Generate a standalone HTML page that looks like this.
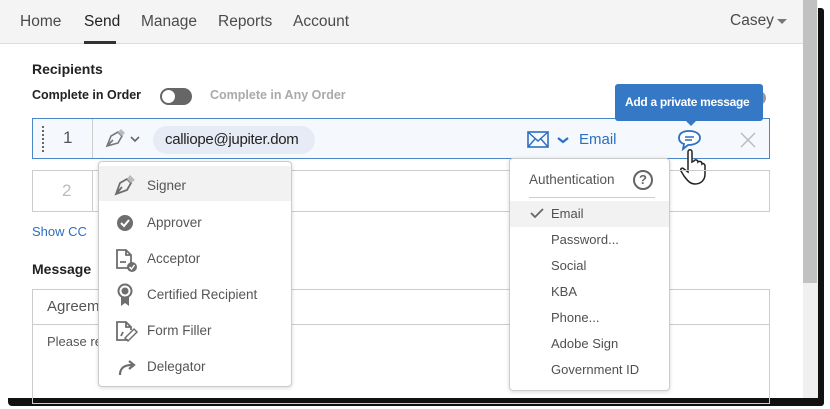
<!DOCTYPE html>
<html><head><meta charset="utf-8"><style>
*{box-sizing:border-box;margin:0;padding:0}
body{width:830px;height:409px;background:#fff;position:relative;overflow:hidden;font-family:"Liberation Sans",sans-serif;color:#333}
.a{position:absolute;white-space:nowrap}
.nav{left:0;top:0;width:803px;height:44px;background:#f4f4f4;border-bottom:1px solid #ddd}
.nv{top:13px;font-size:15.5px;color:#4b4b4b}
.mi{font-size:13.5px;color:#555}
.ai{font-size:13px;color:#505050;left:551px}
</style></head><body>
<div class="a nav"></div>
<div class="a nv" style="left:20px">Home</div>
<div class="a nv" style="left:84px;color:#222">Send</div>
<div class="a" style="left:84px;top:41px;width:32px;height:3px;background:#333"></div>
<div class="a nv" style="left:141px">Manage</div>
<div class="a nv" style="left:218px">Reports</div>
<div class="a nv" style="left:293px">Account</div>
<div class="a nv" style="left:730px;top:12px">Casey</div>
<div class="a" style="left:777px;top:19px;border-left:5px solid transparent;border-right:5px solid transparent;border-top:5px solid #777"></div>
<!-- scrollbar & shadow -->
<div class="a" style="left:803px;top:0;width:15px;height:398px;background:#f0f0f0"></div>
<div class="a" style="left:803px;top:0;width:14px;height:283px;background:#c1c1c1"></div>
<div class="a" style="left:818px;top:8px;width:6px;height:398px;background:#111;border-radius:0 3px 3px 0"></div>
<div class="a" style="left:8px;top:398px;width:816px;height:8px;background:#111;border-radius:0 0 4px 4px"></div>

<div class="a" style="left:32px;top:61px;font-size:14px;font-weight:bold;color:#222">Recipients</div>
<div class="a" style="left:32px;top:88px;font-size:12.5px;font-weight:bold;color:#222">Complete in Order</div>
<div class="a" style="left:160px;top:88px;width:32px;height:17px;border-radius:9px;background:#666"></div>
<div class="a" style="left:162px;top:90px;width:13px;height:13px;border-radius:50%;background:#fff"></div>
<div class="a" style="left:210px;top:88px;font-size:12.5px;font-weight:bold;color:#aaa">Complete in Any Order</div>
<div class="a" style="left:752px;top:91px;width:14px;height:14px;border-radius:50%;background:#999"></div>

<!-- row 1 -->
<div class="a" style="left:32px;top:118px;width:738px;height:41px;border:1px solid #4a86c8;background:#f5f8fc"></div>
<div class="a" style="left:42px;top:126px;height:26px;border-left:2px dotted #666"></div>
<div class="a" style="left:63px;top:128px;font-size:17px;color:#555">1</div>
<div class="a" style="left:92px;top:119px;width:1px;height:39px;background:#ccc"></div>
<svg class="a" style="left:104px;top:127px" width="40" height="24" viewBox="0 0 40 24"><path d="M3 19 L7 9 L14 5 L18 9 L14 16 Z M3 19 L9 13" fill="none" stroke="#777" stroke-width="1.6"/><path d="M14 5 L17 2 L21 6 L18 9 Z" fill="#bbb"/><path d="M27 10 L31 14 L35 10" fill="none" stroke="#666" stroke-width="1.6"/></svg>
<div class="a" style="left:153px;top:126px;width:162px;height:28px;border-radius:14px;background:#e6ebf5"></div>
<div class="a" style="left:165px;top:131px;font-size:15px;letter-spacing:-0.3px;color:#222">calliope@jupiter.dom</div>
<svg class="a" style="left:527px;top:130px" width="50" height="20" viewBox="0 0 50 20"><rect x="1" y="2" width="20" height="15" fill="none" stroke="#2d6fc0" stroke-width="1.6"/><path d="M1 2 L11 11 L21 2 M1 17 L8 9 M21 17 L14 9" fill="none" stroke="#2d6fc0" stroke-width="1.4"/><path d="M31 8 L36 12 L41 8" fill="none" stroke="#2d6fc0" stroke-width="2.2"/></svg>
<div class="a" style="left:579px;top:131px;font-size:15px;color:#2d6fc0">Email</div>
<svg class="a" style="left:740px;top:132px" width="16" height="16"><path d="M1 1 L15 15 M15 1 L1 15" stroke="#bbb" stroke-width="1.5"/></svg>
<!-- tooltip -->
<div class="a" style="left:615px;top:84px;width:148px;height:37px;background:#3478c6;border-radius:3px"></div>
<div class="a" style="left:685px;top:120px;border-left:6px solid transparent;border-right:6px solid transparent;border-top:6px solid #3478c6"></div>
<div class="a" style="left:625px;top:95px;font-size:12px;letter-spacing:-0.3px;font-weight:bold;color:#fff">Add a private message</div>
<svg class="a" style="left:676px;top:128px" width="30" height="60" viewBox="0 0 30 60"><path d="M13 3 C6 3 3 6 3 10 C3 13 5 15 8 16 L7 21 L12 17 C19 17 24 14 24 10 C24 6 20 3 13 3 Z" fill="#fff" stroke="#2d6fc0" stroke-width="1.8"/><path d="M9 9 H18 M9 12 H16" stroke="#2d6fc0" stroke-width="1.4"/><path d="M12 24 C12 21 16 21 16 24 L16 34 L18 33 C19 31 22 32 22 34 C23 33 26 33 26 36 C27 35 29 36 29 38 L29 46 C29 52 25 56 19 56 C14 56 11 52 8 48 L5 43 C4 41 6 39 8 41 L12 44 Z" fill="#fff" stroke="#222" stroke-width="1.5"/></svg>

<!-- row 2 -->
<div class="a" style="left:32px;top:170px;width:738px;height:42px;border:1px solid #ccc"></div>
<div class="a" style="left:62px;top:181px;font-size:17px;color:#bbb">2</div>
<div class="a" style="left:92px;top:171px;width:1px;height:40px;background:#ccc"></div>
<div class="a" style="left:285px;top:182px;font-size:15px;color:#333">il</div>
<div class="a" style="left:32px;top:224px;font-size:13px;color:#2d6fc0">Show CC</div>
<div class="a" style="left:32px;top:261px;font-size:14px;font-weight:bold;color:#222">Message</div>
<div class="a" style="left:32px;top:289px;width:738px;height:115px;border:1px solid #ccc"></div>
<div class="a" style="left:33px;top:324px;width:736px;height:1px;background:#ccc"></div>
<div class="a" style="left:47px;top:298px;font-size:15px;color:#555">Agreem</div>
<div class="a" style="left:47px;top:334px;font-size:13px;color:#555">Please re</div>
<div class="a" style="left:289px;top:334px;font-size:13px;color:#555">.</div>

<!-- left menu -->
<div class="a" style="left:98px;top:161px;width:194px;height:226px;background:#fff;border:1px solid #ccc;border-radius:4px;box-shadow:0 1px 4px rgba(0,0,0,.15)"></div>
<div class="a" style="left:99px;top:166px;width:192px;height:35px;background:#f2f2f2"></div>
<svg class="a" style="left:112px;top:172px" width="30" height="210" viewBox="0 0 30 210">
<g fill="none" stroke="#6e6e6e" stroke-width="1.8"><path d="M4 22 L8 11 L15 7 L19 11 L15 18 Z M4 22 L10 15"/></g><path d="M15 7 L18 3 L23 8 L19 11 Z" fill="#bbb"/>
<circle cx="13" cy="51" r="8" fill="#6e6e6e"/><path d="M9 51 L12 54 L17 48" fill="none" stroke="#fff" stroke-width="2"/>
<path d="M5 78 H14 L19 83 V96 H5 Z M14 78 V83 H19 M8 90 H14" fill="none" stroke="#6e6e6e" stroke-width="1.8"/><circle cx="20" cy="95" r="5" fill="#6e6e6e"/><path d="M17.5 95 L19.5 97 L22.5 93" fill="none" stroke="#fff" stroke-width="1.4"/>
<circle cx="13" cy="119" r="6.5" fill="none" stroke="#6e6e6e" stroke-width="2"/><circle cx="13" cy="119" r="3.5" fill="#6e6e6e"/><path d="M9 125 V134 L13 131 L17 134 V125" fill="#6e6e6e"/>
<path d="M16 168 H5 V150 H14 L19 155 V158 M14 150 V155 H19 M9 164 L11 160" fill="none" stroke="#6e6e6e" stroke-width="1.8"/><path d="M13 166 L22 157 L25 160 L16 169 Z" fill="none" stroke="#6e6e6e" stroke-width="1.5"/>
<path d="M8 203 C8 196 12 193 20 193 M17 189 L22 193 L17 197" fill="none" stroke="#6e6e6e" stroke-width="2.2"/>
</svg>
<div class="a mi" style="left:147px;top:178px">Signer</div>
<div class="a mi" style="left:147px;top:215px">Approver</div>
<div class="a mi" style="left:147px;top:251px">Acceptor</div>
<div class="a mi" style="left:147px;top:287px">Certified Recipient</div>
<div class="a mi" style="left:147px;top:323px">Form Filler</div>
<div class="a mi" style="left:147px;top:359px">Delegator</div>

<!-- right menu -->
<div class="a" style="left:509px;top:158px;width:161px;height:233px;background:#fff;border:1px solid #ccc;border-radius:4px;box-shadow:0 1px 4px rgba(0,0,0,.15)"></div>
<div class="a" style="left:529px;top:172px;font-size:13.5px;color:#555">Authentication</div>
<div class="a" style="left:633px;top:170px;width:20px;height:20px;border:2px solid #666;border-radius:50%;font-size:13px;font-weight:bold;color:#666;text-align:center;line-height:16px">?</div>
<div class="a" style="left:529px;top:197px;width:126px;height:1px;background:#ccc"></div>
<div class="a" style="left:510px;top:201px;width:159px;height:26px;background:#f2f2f2"></div>
<svg class="a" style="left:530px;top:207px" width="14" height="12"><path d="M1 6 L5 10 L13 2" fill="none" stroke="#666" stroke-width="1.8"/></svg>
<div class="a ai" style="top:206px">Email</div>
<div class="a ai" style="top:232px">Password...</div>
<div class="a ai" style="top:258px">Social</div>
<div class="a ai" style="top:284px">KBA</div>
<div class="a ai" style="top:310px">Phone...</div>
<div class="a ai" style="top:336px">Adobe Sign</div>
<div class="a ai" style="top:362px">Government ID</div>
</body></html>
